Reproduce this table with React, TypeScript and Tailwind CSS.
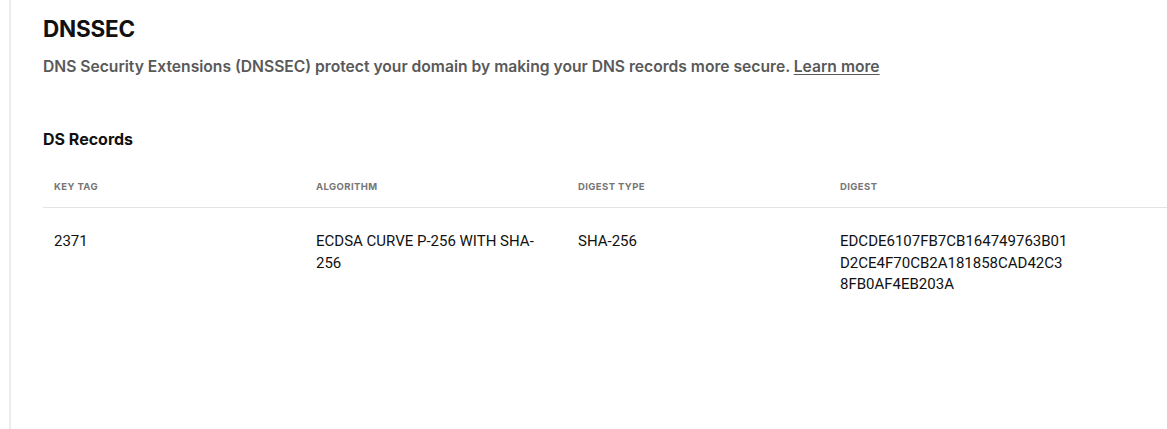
const records = [
  {
    keyTag: "2371",
    algorithm: "ECDSA CURVE P-256 WITH SHA-256",
    digestType: "SHA-256",
    digest: ["EDCDE6107FB7CB164749763B01", "D2CE4F70CB2A181858CAD42C3", "8FB0AF4EB203A"],
  },
];

export default function App() {
  return (
    <div className="min-h-[429px] bg-white pl-[9px] font-['Inter',sans-serif]">
      <div className="min-h-[429px] border-l-2 border-[#ececec] pl-[32px] pt-[14px]">
        <h1 className="text-[22.5px] leading-[30px] font-bold tracking-[-0.2px] text-[#111111]">DNSSEC</h1>
        <p className="mt-[13px] text-[15.65px] leading-[20px] font-semibold text-[#595959]">
          DNS Security Extensions (DNSSEC) protect your domain by making your DNS records more secure.{" "}
          <a href="#" className="underline underline-offset-2">Learn more</a>
        </p>

        <h2 className="mt-[52px] text-[16px] leading-[20px] font-bold text-[#111111]">DS Records</h2>

        <div className="mt-[31px]">
          <div className="grid grid-cols-[262px_262px_262px_1fr] border-b border-[#e3e3e3] pb-[13px] text-[9.5px] leading-[14px] font-bold tracking-[0.4px] text-[#767676]">
            <div className="pl-[11px]">KEY TAG</div>
            <div className="pl-[11px]">ALGORITHM</div>
            <div className="pl-[11px]">DIGEST TYPE</div>
            <div className="pl-[11px]">DIGEST</div>
          </div>
          {records.map((r) => (
            <div
              key={r.keyTag}
              className="grid grid-cols-[262px_262px_262px_1fr] pt-[23px] font-['Roboto',sans-serif] text-[15px] leading-[21.5px] text-[#111111]"
            >
              <div className="pl-[11px]">{r.keyTag}</div>
              <div className="pl-[11px] w-[232px] break-all">{r.algorithm}</div>
              <div className="pl-[11px]">{r.digestType}</div>
              <div className="pl-[11px]">
                {r.digest.map((line) => (
                  <span key={line} className="block">{line}</span>
                ))}
              </div>
            </div>
          ))}
        </div>
      </div>
    </div>
  );
}
